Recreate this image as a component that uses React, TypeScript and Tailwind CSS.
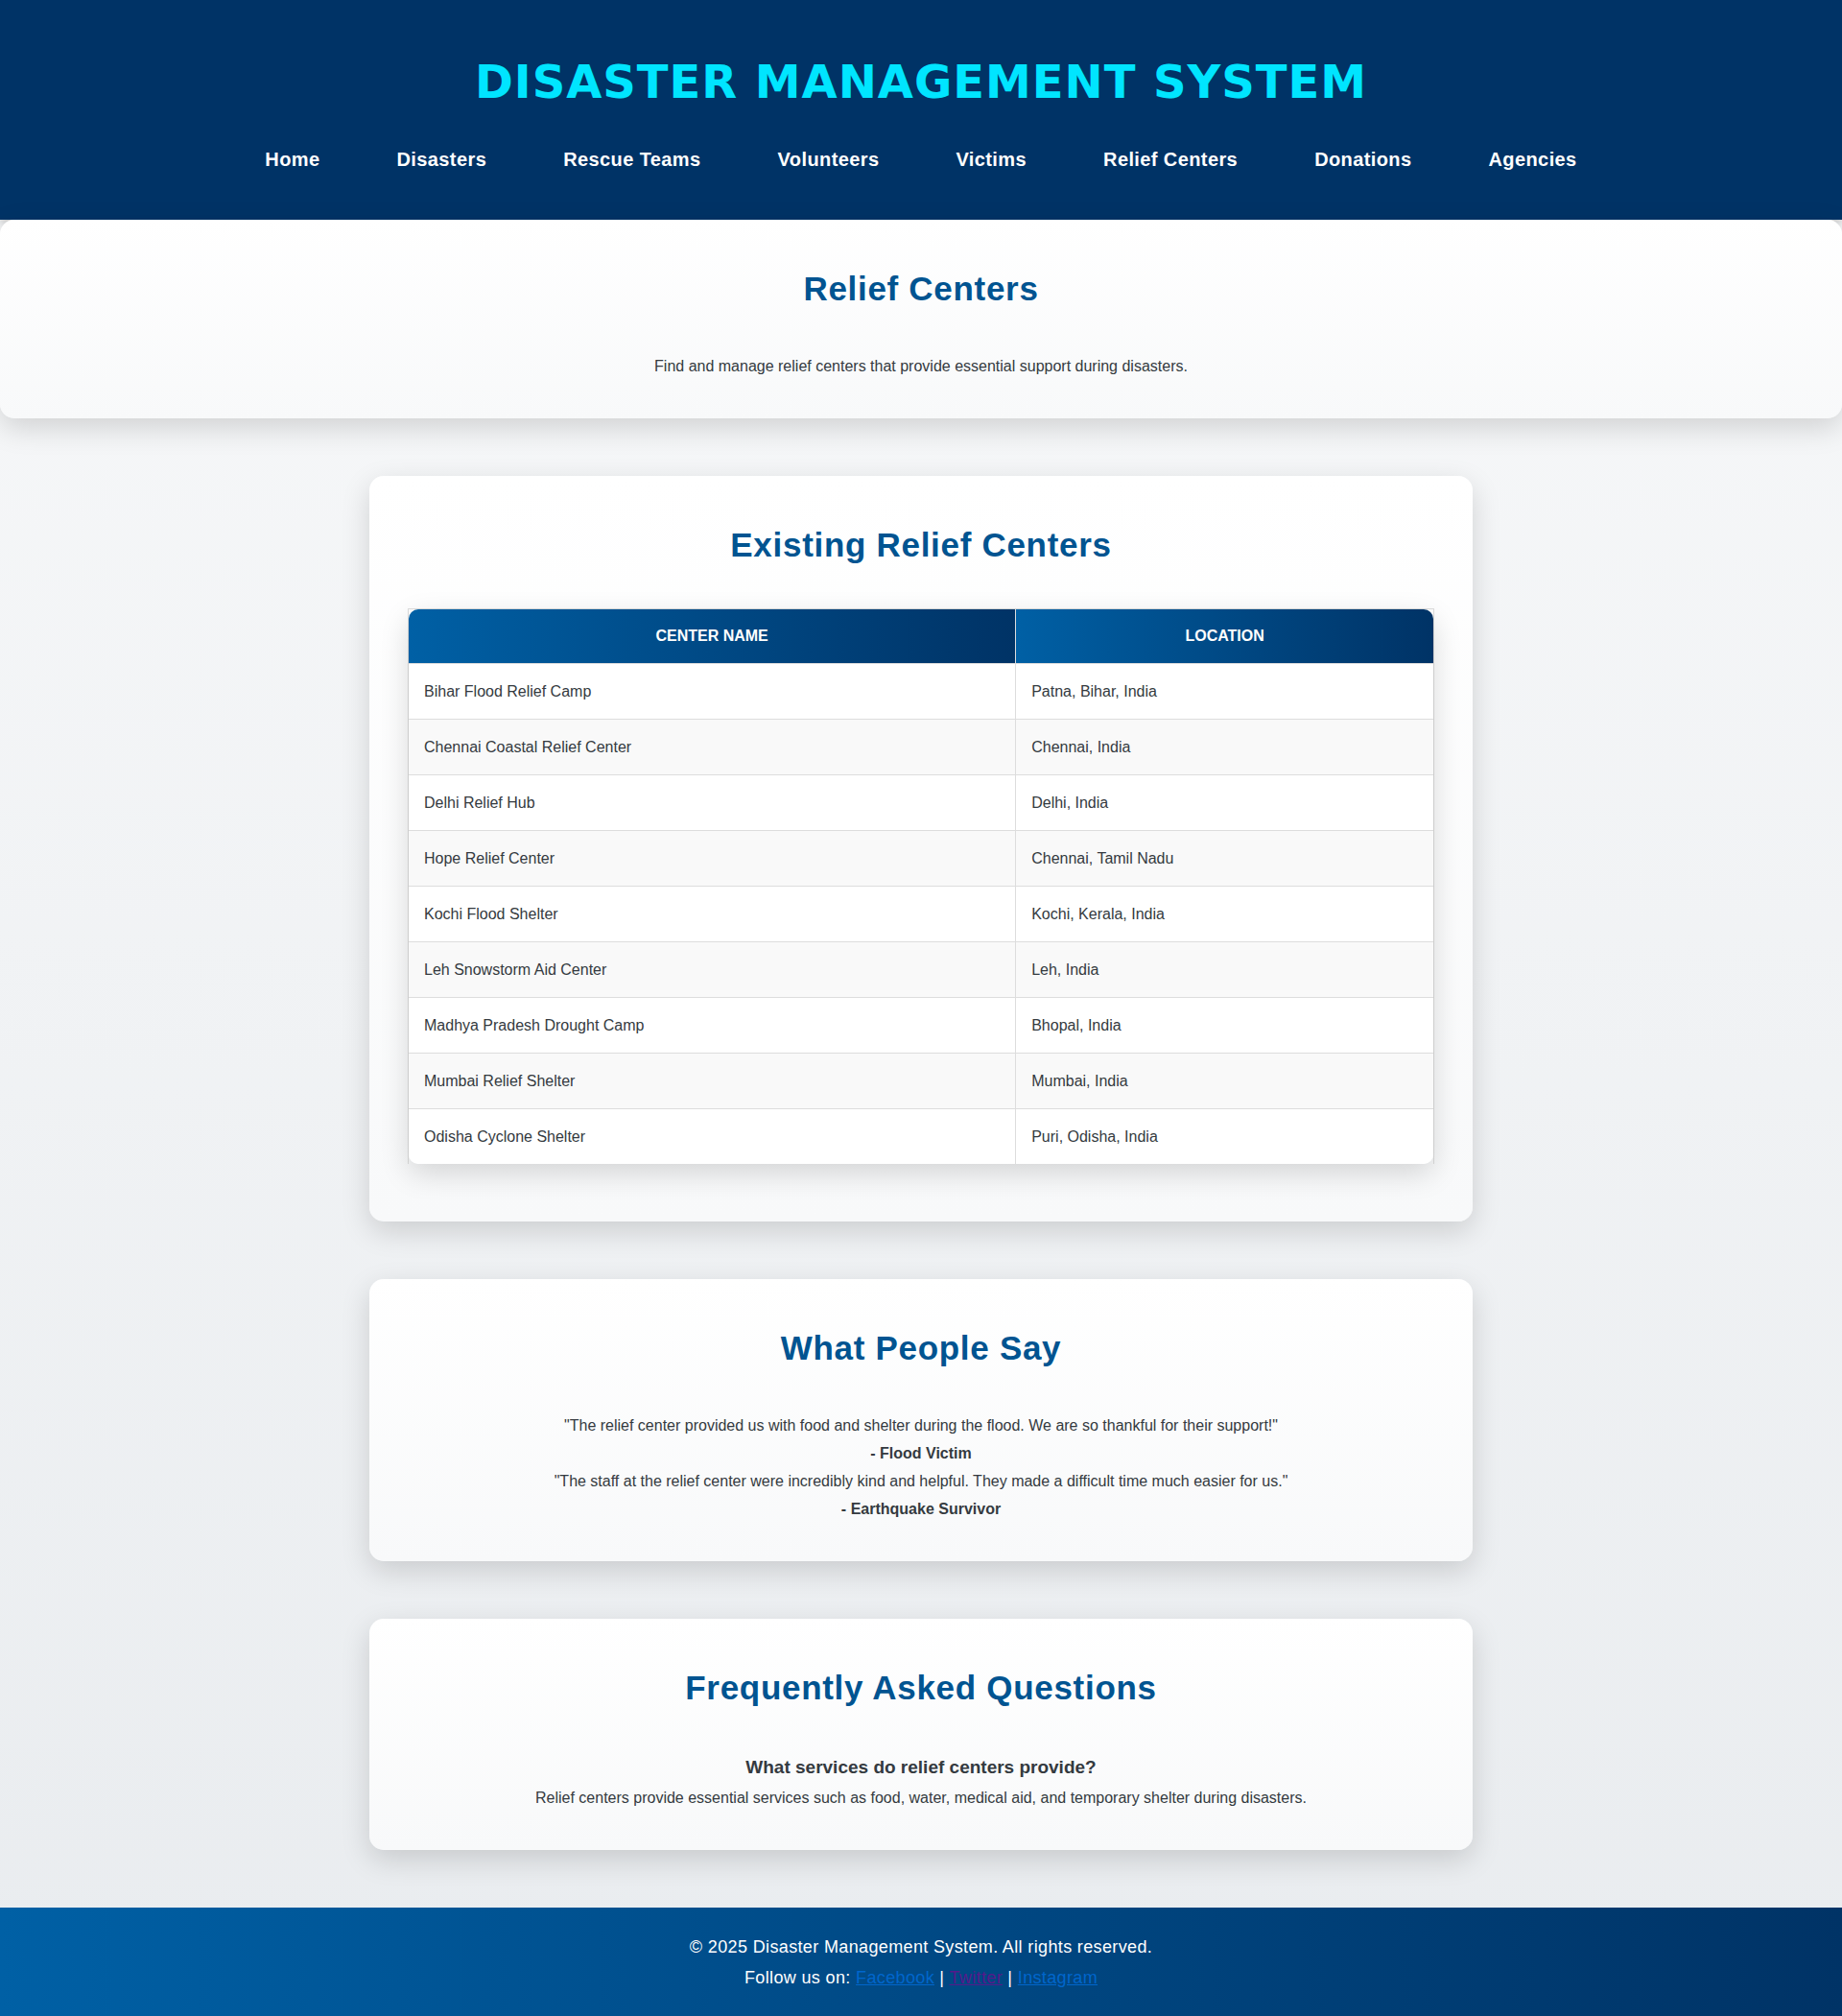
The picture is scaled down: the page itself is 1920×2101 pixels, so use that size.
import type { ReactNode } from "react";

const navItems = [
  "Home",
  "Disasters",
  "Rescue Teams",
  "Volunteers",
  "Victims",
  "Relief Centers",
  "Donations",
  "Agencies",
];

const centers = [
  { name: "Bihar Flood Relief Camp", location: "Patna, Bihar, India" },
  { name: "Chennai Coastal Relief Center", location: "Chennai, India" },
  { name: "Delhi Relief Hub", location: "Delhi, India" },
  { name: "Hope Relief Center", location: "Chennai, Tamil Nadu" },
  { name: "Kochi Flood Shelter", location: "Kochi, Kerala, India" },
  { name: "Leh Snowstorm Aid Center", location: "Leh, India" },
  { name: "Madhya Pradesh Drought Camp", location: "Bhopal, India" },
  { name: "Mumbai Relief Shelter", location: "Mumbai, India" },
  { name: "Odisha Cyclone Shelter", location: "Puri, Odisha, India" },
];

function Card({ title, full, children }: { title: string; full?: boolean; children: ReactNode }) {
  return (
    <section
      className={
        "w-full rounded-[15px] bg-linear-to-b from-white to-[#f8f9fa] p-10 text-center shadow-[0_10px_30px_rgba(0,0,0,0.15)] " +
        (full ? "" : "max-w-[1150px]")
      }
    >
      <h2 className="mb-[35px] text-[35px] leading-[63px] font-bold tracking-[0.02em] text-[#005491]">{title}</h2>
      {children}
    </section>
  );
}

function HeadCell({ children }: { children: ReactNode }) {
  return (
    <th
      scope="col"
      className="border-r border-b border-[#dddddd] bg-linear-to-r from-[#0060a5] to-[#003366] px-4 py-3.5 text-center leading-7 font-bold text-white uppercase last:border-r-0"
    >
      {children}
    </th>
  );
}

function Cell({ children }: { children: ReactNode }) {
  return (
    <td className="border-r border-b border-[#dddddd] px-4 py-3.5 group-last:border-b-0 last:border-r-0">{children}</td>
  );
}

export default function App() {
  return (
    <div className="bg-linear-to-b from-[#f8f9fa] to-[#e9ecef] font-['Liberation_Sans',Arial,sans-serif] text-base leading-[29px] text-[#343a40]">
      <header className="bg-[#003366] px-5 pt-[42px] pb-[45px] text-center shadow-[0_4px_10px_rgba(0,0,0,0.2)]">
        <h1 className="mb-5 font-['DejaVu_Sans',Verdana,sans-serif] text-5xl leading-[86px] font-bold tracking-[0.02em] text-[#00e5ff] uppercase">
          Disaster Management System
        </h1>
        <nav aria-label="Main">
          <ul className="flex flex-wrap justify-center gap-x-20">
            {navItems.map((item) => (
              <li key={item}>
                <a href="#" className="block text-xl leading-9 font-bold tracking-[0.02em] text-white">
                  {item}
                </a>
              </li>
            ))}
          </ul>
        </nav>
      </header>

      <main className="flex flex-col items-center gap-[60px] pb-[60px]">
        <Card title="Relief Centers" full>
          <p>Find and manage relief centers that provide essential support during disasters.</p>
        </Card>

        <Card title="Existing Relief Centers">
          <div className="mb-5 border border-b-0 border-[#dddddd]">
            <div className="overflow-hidden rounded-[10px] shadow-[0_10px_30px_rgba(0,0,0,0.15)]">
              <table className="w-full border-separate border-spacing-0 text-left">
                <thead>
                  <tr>
                    <HeadCell>Center Name</HeadCell>
                    <HeadCell>Location</HeadCell>
                  </tr>
                </thead>
                <tbody>
                  {centers.map((center) => (
                    <tr key={center.name} className="group bg-white even:bg-[#f9f9f9]">
                      <Cell>{center.name}</Cell>
                      <Cell>{center.location}</Cell>
                    </tr>
                  ))}
                </tbody>
              </table>
            </div>
          </div>
        </Card>

        <Card title="What People Say">
          <p>"The relief center provided us with food and shelter during the flood. We are so thankful for their support!"</p>
          <p className="font-bold">- Flood Victim</p>
          <p>"The staff at the relief center were incredibly kind and helpful. They made a difficult time much easier for us."</p>
          <p className="font-bold">- Earthquake Survivor</p>
        </Card>

        <Card title="Frequently Asked Questions">
          <h3 className="text-[19px] leading-[34px] font-bold">What services do relief centers provide?</h3>
          <p>Relief centers provide essential services such as food, water, medical aid, and temporary shelter during disasters.</p>
        </Card>
      </main>

      <footer className="bg-linear-to-r from-[#0060a5] to-[#003366] px-5 pt-[25px] pb-6 text-center text-lg leading-[32px] tracking-[0.02em] text-white">
        <p>© 2025 Disaster Management System. All rights reserved.</p>
        <p>
          Follow us on:{" "}
          <a href="#" className="text-[#0066cc] underline">Facebook</a> |{" "}
          <a href="#" className="text-[#551a8b] underline">Twitter</a> |{" "}
          <a href="#" className="text-[#0066cc] underline">Instagram</a>
        </p>
      </footer>
    </div>
  );
}
